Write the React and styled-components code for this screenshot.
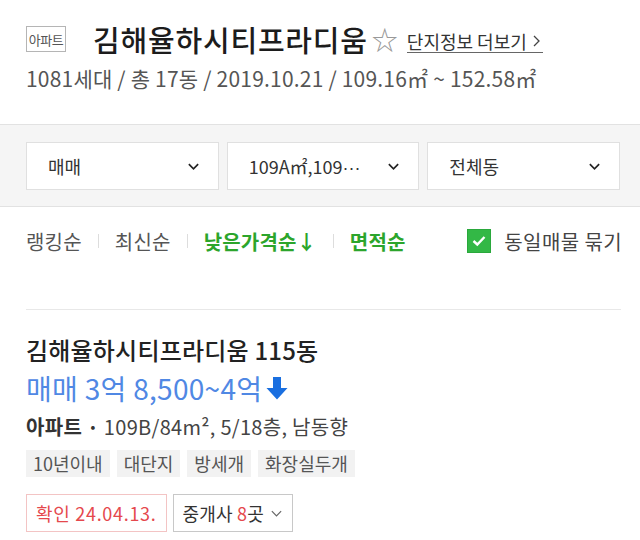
import React from 'react';
import styled, { createGlobalStyle } from 'styled-components';

const GlobalStyle = createGlobalStyle`
  body {
    margin: 0;
    background: #fff;
    font-family: "Noto Sans CJK KR", "Noto Sans", sans-serif;
    color: #222;
  }
`;

const Page = styled.div`
  width: 640px;
  height: 540px;
  overflow: hidden;
`;

const Header = styled.div`
  padding: 20px 20px 0 26px;
  height: 124px;
  box-sizing: border-box;
`;

const TitleRow = styled.div`
  display: flex;
  align-items: center;
  height: 38px;
`;

const TypeBadge = styled.span`
  display: inline-flex;
  align-items: center;
  justify-content: center;
  box-sizing: border-box;
  width: 40px;
  height: 26px;
  border: 1px solid #b5b5b5;
  font-size: 13px;
  color: #555;
  letter-spacing: -0.5px;
  margin-right: 27px;
`;

const Title = styled.h1`
  margin: 0;
  font-size: 29px;
  font-weight: 500;
  color: #1c1c1c;
  letter-spacing: 0.8px;
`;

const Star = styled.span`
  margin: 0 9px 0 4px;
  font-size: 26px;
  color: #999;
  line-height: 1;
`;

const MoreLink = styled.a`
  display: inline-flex;
  align-items: center;
  font-size: 18px;
  color: #333;
  text-decoration: none;
  border-bottom: 1px solid #666;
  line-height: 22px;
  margin-top: 4px;
`;

const Meta = styled.div`
  margin-top: 6px;
  font-size: 21px;
  line-height: 28px;
  color: #555;
  letter-spacing: 0.2px;
`;

const FilterBand = styled.div`
  background: #f5f5f5;
  border-top: 1px solid #e2e2e2;
  border-bottom: 1px solid #e2e2e2;
  padding: 17px 20px 16px 26px;
  display: grid;
  grid-template-columns: repeat(3, 1fr);
  gap: 8px;
`;

const SelectBox = styled.div`
  display: flex;
  align-items: center;
  justify-content: space-between;
  height: 48px;
  box-sizing: border-box;
  background: #fff;
  border: 1px solid #e0e0e0;
  padding: 0 18px 0 21px;
  font-size: 18px;
  color: #333;
`;

const Dots = styled.span`
  font-family: "Liberation Sans", sans-serif;
  letter-spacing: 0;
`;

const SortBar = styled.div`
  display: flex;
  align-items: center;
  height: 68px;
  padding: 0 18px 0 26px;
`;

const SortItem = styled.span`
  font-size: 20px;
  color: ${p => (p.$active ? '#2ca52c' : '#555')};
  font-weight: ${p => (p.$active ? 700 : 400)};
  letter-spacing: 0.2px;
`;

const Sep = styled.span`
  width: 1px;
  height: 14px;
  background: #ddd;
  margin: 0 16px;
`;

const Grouping = styled.label`
  margin-left: auto;
  display: flex;
  align-items: center;
  gap: 13px;
  font-size: 20px;
  color: #444;
  letter-spacing: 0.4px;
`;

const Check = styled.span`
  width: 24px;
  height: 24px;
  background: #33b846;
  border: 1px solid #2aa83c;
  box-sizing: border-box;
  display: flex;
  align-items: center;
  justify-content: center;
`;

const Divider = styled.hr`
  margin: 34px 19px 0 26px;
  border: 0;
  border-top: 1px solid #e8e8e8;
`;

const Item = styled.div`
  padding: 23px 20px 0 26px;
`;

const ItemTitle = styled.div`
  font-size: 24px;
  font-weight: 500;
  color: #222;
  letter-spacing: 0.2px;
  line-height: 34px;
`;

const Price = styled.div`
  display: flex;
  align-items: center;
  margin-top: 3px;
  font-size: 28px;
  color: #5088e4;
  letter-spacing: 0.3px;
  line-height: 36px;
`;

const Spec = styled.div`
  margin-top: 8px;
  font-size: 20px;
  color: #444;
  line-height: 26px;
  letter-spacing: 0.3px;

  b {
    font-weight: 700;
    color: #333;
  }
`;

const Tags = styled.div`
  display: flex;
  gap: 7px;
  margin-top: 10px;
`;

const Tag = styled.span`
  background: #f2f2f2;
  color: #555;
  font-size: 18px;
  padding: 0 7px;
  height: 27px;
  line-height: 27px;
`;

const Footer = styled.div`
  display: flex;
  gap: 6px;
  margin-top: 17px;
`;

const Chip = styled.span`
  display: inline-flex;
  align-items: center;
  gap: 6px;
  height: 38px;
  box-sizing: border-box;
  padding: 0 9px;
  border: 1px solid ${p => (p.$tone === 'red' ? '#f3c4c4' : '#c8c8c8')};
  color: ${p => (p.$tone === 'red' ? '#e5484d' : '#333')};
  font-size: 18px;
  letter-spacing: ${p => (p.$tone === 'red' ? '0.7px' : '0.2px')};

  em {
    font-style: normal;
    color: #e5484d;
  }
`;

const Chevron = ({ size = 14, color = '#222', width = 1.8 }) => (
  <svg width={size} height={size} viewBox="0 0 14 14" fill="none">
    <path d="M2 4.5 L7 9.5 L12 4.5" stroke={color} strokeWidth={width} />
  </svg>
);

const selects = [
  { key: 'trade', label: '매매' },
  { key: 'area', label: '109A㎡,109', more: true },
  { key: 'dong', label: '전체동' },
];
const tags = ['10년이내', '대단지', '방세개', '화장실두개'];

export default function App() {
  return (
    <Page>
      <GlobalStyle />
      <Header>
        <TitleRow>
          <TypeBadge>아파트</TypeBadge>
          <Title>김해율하시티프라디움</Title>
          <Star>☆</Star>
          <MoreLink href="#">
            단지정보 더보기
            <svg width="12" height="14" viewBox="0 0 12 14" fill="none" style={{ marginLeft: 4 }}>
              <path d="M3 2 L8 7 L3 12" stroke="#444" strokeWidth="1.3" />
            </svg>
          </MoreLink>
        </TitleRow>
        <Meta>1081세대 / 총 17동 / 2019.10.21 / 109.16㎡ ~ 152.58㎡</Meta>
      </Header>

      <FilterBand>
        {selects.map(s => (
          <SelectBox key={s.key}>
            <span>
              {s.label}
              {s.more && <Dots>···</Dots>}
            </span>
            <Chevron size={13} />
          </SelectBox>
        ))}
      </FilterBand>

      <SortBar>
        <SortItem>랭킹순</SortItem>
        <Sep />
        <SortItem>최신순</SortItem>
        <Sep />
        <SortItem $active>낮은가격순↓</SortItem>
        <Sep />
        <SortItem $active>면적순</SortItem>
        <Grouping>
          <Check>
            <svg width="14" height="12" viewBox="0 0 14 12" fill="none">
              <path d="M1.5 6 L5.3 9.5 L12.5 2" stroke="#fff" strokeWidth="2.4" />
            </svg>
          </Check>
          동일매물 묶기
        </Grouping>
      </SortBar>

      <Divider />

      <Item>
        <ItemTitle>김해율하시티프라디움 115동</ItemTitle>
        <Price>
          매매 3억 8,500~4억
          <svg width="22" height="24" viewBox="0 0 22 24" style={{ marginLeft: 4 }}>
            <path d="M7 1 H15 V12 H21.5 L11 23.5 L0.5 12 H7 Z" fill="#1a6fe0" />
          </svg>
        </Price>
        <Spec>
          <b>아파트 ·</b> 109B/84m², 5/18층, 남동향
        </Spec>
        <Tags>
          {tags.map(t => (
            <Tag key={t}>{t}</Tag>
          ))}
        </Tags>
        <Footer>
          <Chip $tone="red">확인 24.04.13.</Chip>
          <Chip>
            <span>
              중개사 <em>8</em>곳
            </span>
            <Chevron size={13} color="#666" width={1.3} />
          </Chip>
        </Footer>
      </Item>
    </Page>
  );
}
